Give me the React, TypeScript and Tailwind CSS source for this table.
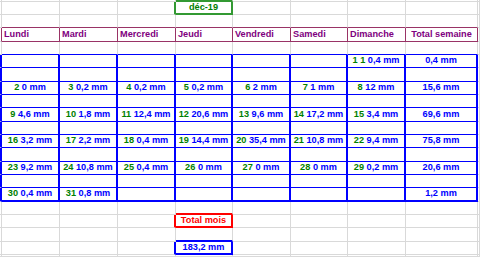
import React from 'react';

type Day = [string, string] | null;

const colW = ['w-[2px]', 'w-[58px]', 'w-[58px]', 'w-[58px]', 'w-[57px]', 'w-[58px]', 'w-[57px]', 'w-[58px]', 'w-[72px]', 'flex-1'];
const rowH = ['h-[2px]', 'h-[13px]', 'h-[13px]', 'h-[14px]', 'h-[13px]', 'h-[13px]', 'h-[14px]', 'h-[13px]', 'h-[13px]', 'h-[14px]', 'h-[13px]', 'h-[13px]', 'h-[14px]', 'h-[13px]', 'h-[13px]', 'h-[14px]', 'h-[13px]', 'h-[13px]', 'h-[14px]', 'h-[13px]', 'h-[2px]'];

const R = {
  gray: 'border-r border-r-[#d9d9d9]',
  purple: 'border-r border-r-[#993366]',
  blue: 'border-r-2 border-r-[#0000ff]',
  green: 'border-r-2 border-r-[#339933]',
  red: 'border-r-2 border-r-[#ff0000]',
};
const B = {
  gray: 'border-b border-b-[#d9d9d9]',
  purple: 'border-b border-b-[#993366]',
  blue: 'border-b border-b-[#0000ff]',
  blue2: 'border-b-2 border-b-[#0000ff]',
  green: 'border-b-2 border-b-[#339933]',
  red: 'border-b-2 border-b-[#ff0000]',
};

const headers = ['Lundi', 'Mardi', 'Mercredi', 'Jeudi', 'Vendredi', 'Samedi', 'Dimanche', 'Total semaine'];

const weeks: { days: Day[]; total: string }[] = [
  { days: [null, null, null, null, null, null, ['1 1', '0,4 mm']], total: '0,4 mm' },
  { days: [['2', '0 mm'], ['3', '0,2 mm'], ['4', '0,2 mm'], ['5', '0,2 mm'], ['6', '2 mm'], ['7', '1 mm'], ['8', '12 mm']], total: '15,6 mm' },
  { days: [['9', '4,6 mm'], ['10', '1,8 mm'], ['11', '12,4 mm'], ['12', '20,6 mm'], ['13', '9,6 mm'], ['14', '17,2 mm'], ['15', '3,4 mm']], total: '69,6 mm' },
  { days: [['16', '3,2 mm'], ['17', '2,2 mm'], ['18', '0,4 mm'], ['19', '14,4 mm'], ['20', '35,4 mm'], ['21', '10,8 mm'], ['22', '9,4 mm']], total: '75,8 mm' },
  { days: [['23', '9,2 mm'], ['24', '10,8 mm'], ['25', '0,4 mm'], ['26', '0 mm'], ['27', '0 mm'], ['28', '0 mm'], ['29', '0,2 mm']], total: '20,6 mm' },
  { days: [['30', '0,4 mm'], ['31', '0,8 mm'], null, null, null, null, null], total: '1,2 mm' },
];

// border colours of each cell (right, bottom)
function borders(r: number, c: number): string {
  let right = R.gray;
  let bottom = B.gray;
  const inBlue = r >= 5 && r <= 15;
  const dataCol = c >= 1 && c <= 8;

  if (r === 2 && dataCol) bottom = B.purple;
  if (r === 3) {
    if (c === 0 || dataCol) right = R.purple;
    if (dataCol) bottom = B.purple;
  }
  if (r === 4 && dataCol) bottom = B.blue;
  if (inBlue) {
    if (c === 0 || dataCol) right = R.blue;
    if (dataCol) bottom = r === 15 ? B.blue2 : B.blue;
  }

  // boxed single cells in the Jeudi column
  if (c === 4 || c === 3) {
    if (r === 1) right = R.green;
    if (r === 17) right = R.red;
    if (r === 19) right = R.blue;
  }
  if (c === 4) {
    if (r === 0 || r === 1) bottom = B.green;
    if (r === 16 || r === 17) bottom = B.red;
    if (r === 18 || r === 19) bottom = B.blue2;
  }
  return `${right} ${bottom}`;
}

function DayCell({ d }: { d: Day }) {
  if (!d) return null;
  return (
    <span className="whitespace-nowrap">
      <span className="text-[#008000]">{d[0]}</span> <span className="text-[#0000ff]">{d[1]}</span>
    </span>
  );
}

function content(r: number, c: number): React.ReactNode {
  if (r === 1 && c === 4) return <div className="w-full text-center text-[#008000]">déc-19</div>;
  if (r === 3 && c >= 1 && c <= 8) {
    return (
      <div className={c === 8 ? 'w-full text-center text-[#800080]' : 'w-full pl-[2px] text-left text-[#800080]'}>
        {headers[c - 1]}
      </div>
    );
  }
  if (r >= 5 && r <= 15 && (r - 5) % 2 === 0 && c >= 1 && c <= 8) {
    const w = weeks[(r - 5) / 2];
    return (
      <div className="w-full text-center">
        {c === 8 ? <span className="text-[#0000ff]">{w.total}</span> : <DayCell d={w.days[c - 1]} />}
      </div>
    );
  }
  if (r === 17 && c === 4) return <div className="w-full text-center text-[#ff0000]">Total mois</div>;
  if (r === 19 && c === 4) return <div className="w-full text-center text-[#0000ff]">183,2 mm</div>;
  return null;
}

export default function App() {
  return (
    <div className="w-[480px] h-[257px] overflow-hidden bg-white font-['Liberation_Sans',Arial,sans-serif] text-[9.2px] font-bold leading-none">
      {rowH.map((h, r) => (
        <div key={r} className={`flex ${h}`}>
          {colW.map((w, c) => (
            <div key={c} className={`${w} shrink-0 flex items-center overflow-hidden ${borders(r, c)}`}>
              {content(r, c)}
            </div>
          ))}
        </div>
      ))}
    </div>
  );
}
